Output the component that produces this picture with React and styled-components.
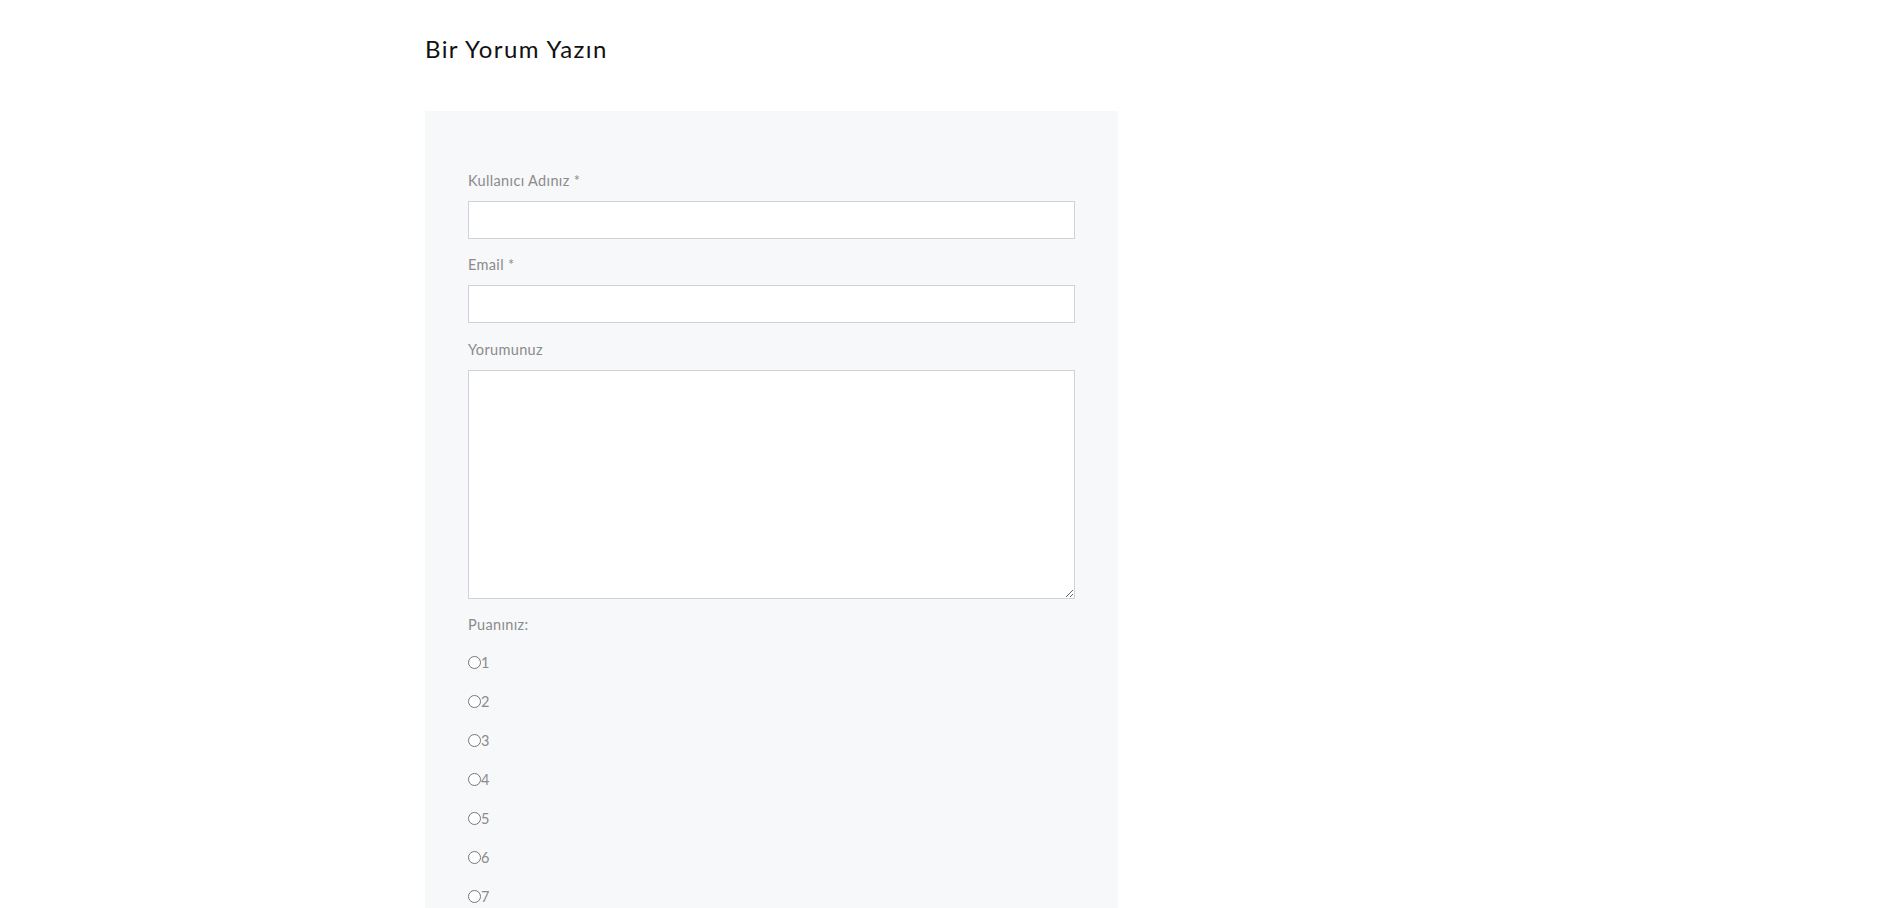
import React from "react";
import styled, { createGlobalStyle } from "styled-components";

const Global = createGlobalStyle`
  html, body { margin: 0; padding: 0; background: #ffffff; }
  body { font-family: "Lato", "Open Sans", sans-serif; }
  * { box-sizing: border-box; }
`;

const Wrapper = styled.div`
  width: 1043px;
  margin: 0 auto;
  padding-top: 34px;
`;

const Title = styled.h3`
  margin: 0 0 48px 0;
  font-size: 24px;
  line-height: 29px;
  font-weight: 400;
  letter-spacing: 1.4px;
  color: #111111;
`;

const Panel = styled.form`
  width: 693px;
  background: #f7f8fa;
  padding: 60px 43px 40px 43px;
  display: flex;
  flex-direction: column;
`;

const Label = styled.label`
  display: block;
  font-size: 14.5px;
  line-height: 20px;
  letter-spacing: 0.35px;
  color: #8b8b8b;
  margin-top: ${(p) => p.$top || 0}px;
  margin-bottom: ${(p) => p.$bottom ?? 10}px;
`;

const TextInput = styled.input`
  display: block;
  width: 607px;
  height: 38px;
  border: 1px solid #cfd3d9;
  background: #ffffff;
  border-radius: 0;
  outline: none;
  padding: 0 10px;
  font-family: inherit;
  font-size: 14px;
`;

const TextArea = styled.textarea`
  display: block;
  width: 607px;
  height: 229px;
  border: 1px solid #cfd3d9;
  background: #ffffff;
  border-radius: 0;
  outline: none;
  padding: 10px;
  font-family: inherit;
  font-size: 14px;
  resize: both;
`;

const RadioList = styled.div`
  display: flex;
  flex-direction: column;
  margin-top: 17px;
`;

const RadioRow = styled.label`
  display: flex;
  align-items: center;
  height: 20px;
  margin-bottom: 19px;
  font-size: 14.5px;
  color: #8b8b8b;
`;

const Radio = styled.input`
  margin: 0;
  width: 13px;
  height: 13px;
  accent-color: #8b8b8b;
`;

export default function App() {
  const ratings = [1, 2, 3, 4, 5, 6, 7, 8, 9, 10];
  return (
    <>
      <Global />
      <Wrapper>
        <Title>Bir Yorum Yazın</Title>
        <Panel onSubmit={(e) => e.preventDefault()}>
          <Label>Kullanıcı Adınız *</Label>
          <TextInput type="text" />
          <Label $top={16}>Email *</Label>
          <TextInput type="email" />
          <Label $top={17}>Yorumunuz</Label>
          <TextArea />
          <Label $top={16} $bottom={0}>Puanınız:</Label>
          <RadioList>
            {ratings.map((r) => (
              <RadioRow key={r}>
                <Radio type="radio" name="rating" value={r} />
                {r}
              </RadioRow>
            ))}
          </RadioList>
        </Panel>
      </Wrapper>
    </>
  );
}
